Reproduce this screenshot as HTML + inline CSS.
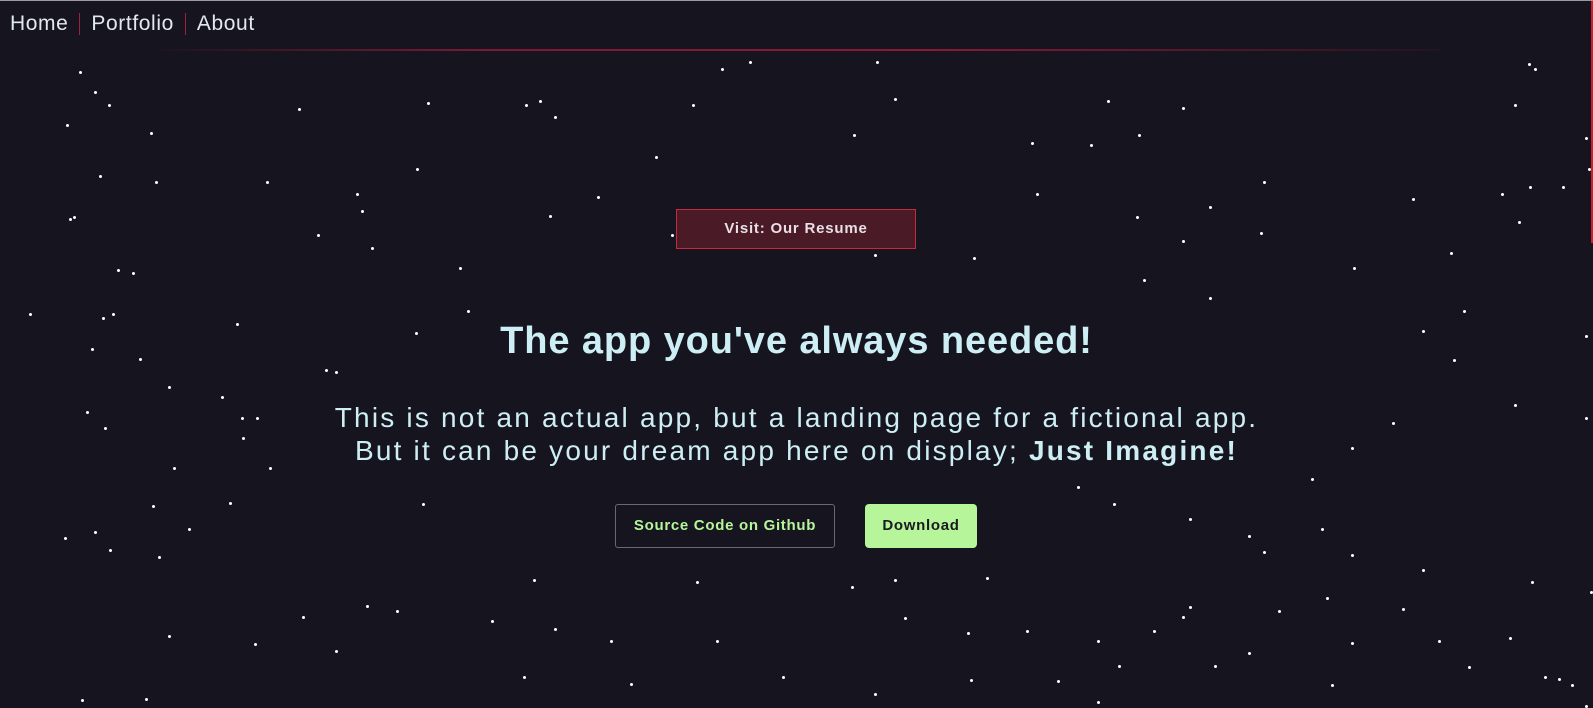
<!DOCTYPE html>
<html><head><meta charset="utf-8"><style>
html,body{margin:0;padding:0;width:1593px;height:701px;overflow:hidden;background:#16141f;font-family:"Liberation Sans",sans-serif;color:#cdeef5}
.top{position:absolute;left:0;top:0;width:1593px;height:1px;background:#9a99a3}
.redr{position:absolute;left:1591px;top:1px;width:2px;height:242px;background:#d0202c}
nav{position:absolute;left:10px;top:12px;font-size:21px;color:#e2e8f0;display:flex;align-items:center;letter-spacing:0.6px}
nav span.sep{display:inline-block;width:1px;height:22px;background:#a0203a;margin:0 11px}
.line{position:absolute;left:160px;top:49px;width:1280px;height:2px;background:linear-gradient(90deg,rgba(90,20,40,0.1),#7a1a35 25%,#8a1a38 60%,rgba(90,20,40,0.2))}
.star{position:absolute;width:3px;height:3px;border-radius:50%;background:#fff}
.resume{position:absolute;left:676px;top:209px;width:240px;height:40px;background:#4a1a27;border:1px solid #c8283a;box-sizing:border-box;color:#e8e0e4;font-weight:bold;font-size:15px;letter-spacing:0.8px;text-align:center;line-height:38px}
h1{position:absolute;left:0;width:1593px;top:318px;margin:0;text-align:center;font-size:38px;line-height:46px;letter-spacing:0.9px;font-weight:bold;color:#cdeef5}
p{position:absolute;left:0;width:1593px;top:401px;margin:0;text-align:center;font-size:28px;line-height:33px;letter-spacing:2.2px;color:#cdeef5}
.b1{position:absolute;left:615px;top:504px;width:220px;height:44px;border:1px solid #6a6878;border-radius:3px;box-sizing:border-box;color:#b6f59a;font-weight:bold;font-size:15px;letter-spacing:0.7px;text-align:center;line-height:42px}
.b2{position:absolute;left:865px;top:504px;width:112px;height:44px;background:#b6f59a;border-radius:4px;color:#1a1a22;font-weight:bold;font-size:15px;letter-spacing:0.7px;text-align:center;line-height:43px}
</style></head><body>
<div class="top"></div><div class="redr"></div>
<nav><span>Home</span><span class="sep"></span><span>Portfolio</span><span class="sep"></span><span>About</span></nav>
<div class="line"></div>
<div id="stars"></div>
<div class="resume">Visit: Our Resume</div>
<h1>The app you've always needed!</h1>
<p>This is not an actual app, but a landing page for a fictional app.<br>But it can be your dream app here on display; <b>Just Imagine!</b></p>
<div class="b1">Source Code on Github</div>
<div class="b2">Download</div>
<script>
var s=[[78,70],[93,90],[106,102],[65,122],[148,130],[293,106],[420,100],[517,102],[531,98],[545,114],[681,102],[710,67],[737,60],[862,60],[880,96],[1090,98],[1120,132],[1163,105],[1504,62],[1510,67],[1490,102],[1560,135],[1015,140],[1073,142],[645,154],[840,132],[97,172],[153,178],[262,178],[350,190],[355,207],[409,165],[588,193],[1020,190],[1190,203],[1243,178],[1390,195],[1477,190],[1505,183],[1537,183],[1563,165],[68,215],[72,213],[365,243],[312,230],[540,212],[660,230],[860,250],[958,253],[1118,213],[1163,236],[1240,228],[1494,218],[1427,248],[115,265],[130,268],[452,263],[1125,275],[1332,263],[1190,292],[100,312],[110,308],[29,308],[232,318],[460,305],[408,327],[90,343],[137,352],[320,363],[330,365],[1400,325],[1440,305],[1430,353],[1560,330],[85,405],[165,380],[218,390],[237,410],[252,410],[102,420],[238,430],[170,460],[265,460],[1490,398],[1560,410],[1370,415],[1290,470],[1330,440],[1060,478],[150,497],[225,494],[185,520],[93,523],[107,540],[63,529],[156,547],[415,495],[1095,495],[1170,510],[1228,527],[1300,520],[1330,545],[1400,560],[970,568],[838,577],[880,570],[525,570],[685,572],[1243,542],[1507,572],[1565,582],[1575,587],[1380,598],[1170,596],[1163,606],[1258,600],[1305,588],[297,606],[483,610],[545,618],[600,630],[705,630],[890,607],[952,622],[1010,620],[1080,630],[1228,642],[1330,632],[1415,630],[1485,627],[1520,665],[1533,667],[1546,673],[1445,656],[1195,655],[1135,620],[1040,669],[955,668],[250,633],[165,625],[360,595],[390,600],[330,640],[515,665],[620,672],[770,665],[860,682],[80,688],[143,687],[1560,694],[1080,690],[1310,673],[1100,655]];
var h='';s.forEach(function(p){h+='<div class="star" style="left:'+Math.round(p[0]*1.016)+'px;top:'+Math.round(p[1]*1.016)+'px"></div>'});
document.getElementById('stars').innerHTML=h;
</script>
</body></html>
